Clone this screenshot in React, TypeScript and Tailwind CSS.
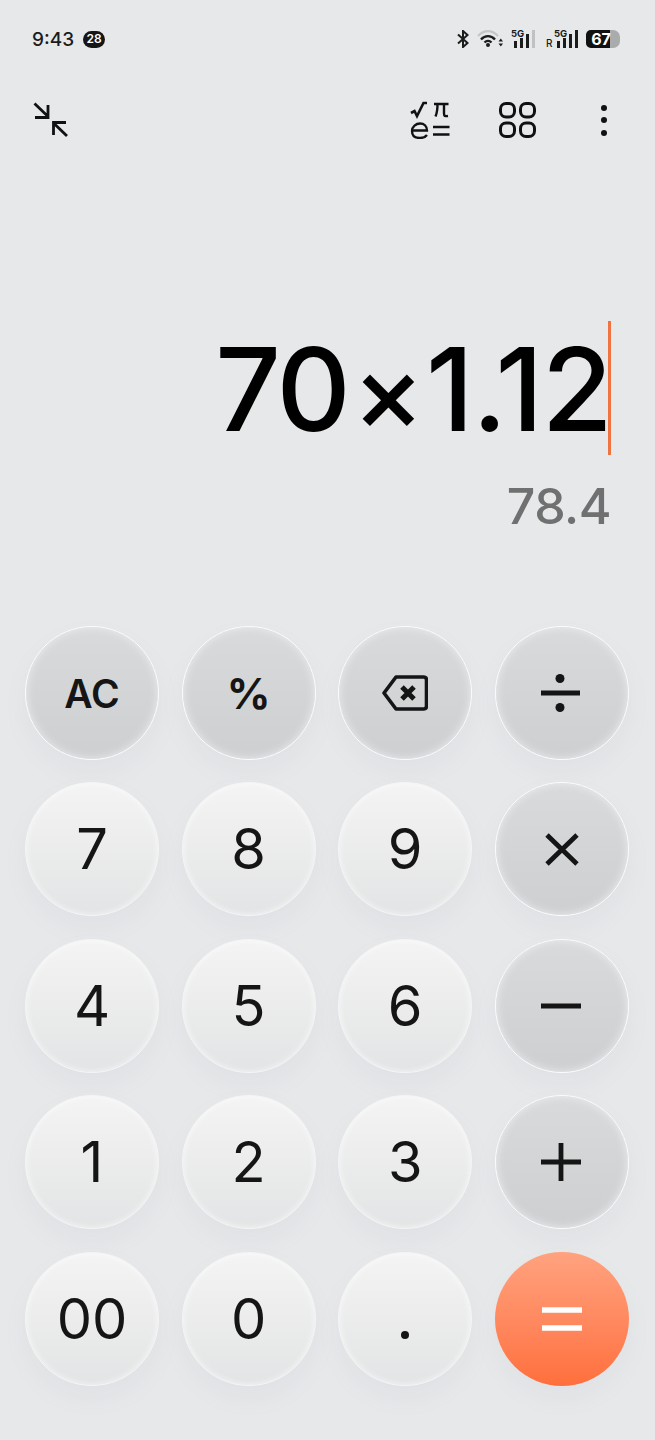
import type { ReactNode } from "react";

type Kind = "light" | "gray" | "accent";

function Key({ kind = "light", children }: { kind?: Kind; children: ReactNode }) {
  const look =
    kind === "light"
      ? "bg-linear-to-b from-[#f4f4f4] to-[#e3e4e5] shadow-[0_12px_22px_rgba(150,155,160,0.08),inset_0_0_6px_rgba(255,255,255,0.7)] border border-[#f4f5f5]"
      : kind === "gray"
        ? "bg-linear-to-b from-[#d8dadb] to-[#cdcfd1] shadow-[0_12px_22px_rgba(150,155,160,0.08),inset_0_0_10px_rgba(240,241,242,0.9)] border-[1.5px] border-[#fcfcfc]"
        : "bg-linear-to-b from-[#ffa27f] to-[#ff6f3c] shadow-[0_12px_22px_rgba(150,155,160,0.08)]";
  return (
    <div className={`w-[134px] h-[134px] rounded-full flex items-center justify-center text-[#151515] ${look}`}>
      {children}
    </div>
  );
}

function Digit({ value }: { value: string }) {
  return <span className="text-[56px] leading-none font-normal">{value}</span>;
}

function Ico({ w, h, className, children }: { w: number; h: number; className?: string; children: ReactNode }) {
  return (
    <svg className={className} width={w} height={h} viewBox={`0 0 ${w} ${h}`} fill="none" stroke="currentColor" strokeWidth="4">
      {children}
    </svg>
  );
}

function Bars({ last }: { last: string }) {
  return (
    <div className="flex items-end gap-[3px]">
      <i className="w-[3px] h-[7px] bg-[#1c1c1c]" />
      <i className="w-[3px] h-[10px] bg-[#1c1c1c]" />
      <i className="w-[3px] h-[14px] bg-[#1c1c1c]" />
      <i className={`w-[3px] h-[18px] ${last}`} />
    </div>
  );
}

function StatusBar() {
  return (
    <div className="h-[78px] flex items-center justify-between pl-[32px] pr-[35px] text-[#1c1c1c]">
      <div className="flex items-center gap-[9px]">
        <span className="text-[19px] font-medium leading-none">9:43</span>
        <span className="w-[22px] h-[17px] rounded-full bg-[#161616] text-white text-[12px] font-semibold leading-none flex items-center justify-center">
          28
        </span>
      </div>
      <div className="flex items-center">
        <svg width="12" height="18" viewBox="0 0 12 18" fill="none" stroke="#1c1c1c" strokeWidth="2">
          <path d="M1 4.500 10.500 13 6 17V1L10.500 5 1 13.500" />
        </svg>
        <svg className="ml-[8px]" width="26" height="18" viewBox="0 0 26 18" fill="none" strokeWidth="2.200">
          <path d="M1 6C7 -0.500 15 -0.500 21 6" stroke="#c4c6c8" />
          <path d="M4 9.500C8 5 14 5 18 9.500" stroke="#1c1c1c" strokeWidth="2.400" />
          <path d="M7.500 12.500C9.500 10.500 12.500 10.500 14.500 12.500" stroke="#1c1c1c" strokeWidth="2.400" />
          <circle cx="11" cy="15" r="2" fill="#1c1c1c" stroke="none" />
          <path d="M21.500 11.500h4.500l-2.200-3zM21.500 13.500h4.500l-2.200 3z" fill="#1c1c1c" stroke="none" />
        </svg>
        <div className="ml-[8px] relative w-[24px] h-[18px]">
          <span className="absolute left-0 -top-[1px] text-[9.500px] font-bold leading-none">5G</span>
          <div className="absolute right-0 bottom-0">
            <Bars last="bg-[#bfc1c3]" />
          </div>
        </div>
        <div className="ml-[11px] relative w-[32px] h-[18px]">
          <span className="absolute left-0 bottom-0 text-[10px] font-medium leading-none">R</span>
          <span className="absolute left-[8px] -top-[1px] text-[9.500px] font-bold leading-none">5G</span>
          <div className="absolute right-0 bottom-0">
            <Bars last="bg-[#1c1c1c]" />
          </div>
        </div>
        <div className="ml-[8px] relative w-[34px] h-[18px] rounded-l-[5px] rounded-r-[7px] bg-[#a9abad] overflow-hidden">
          <div className="w-[24px] h-full bg-[#111111]" />
          <span className="absolute left-0 top-0 w-[30px] text-center text-white text-[16px] font-bold leading-[18px]">67</span>
        </div>
      </div>
    </div>
  );
}

function Toolbar() {
  return (
    <div className="h-[84px] flex items-center pl-[33px] pr-[48px] text-[#111111]">
      <svg width="36" height="36" viewBox="0 0 36 36" fill="none" stroke="currentColor" strokeWidth="2.800">
        <path d="M1.500 1.500 14.500 14M15 3v12.500H2M34 34 21 21.500M20.500 33V20.500H33" />
      </svg>
      <svg className="ml-auto" width="40" height="38" viewBox="0 0 40 38" fill="none" stroke="currentColor" strokeWidth="2.300">
        <path d="M1 12 4.500 10 7 15 13.500 2H17" strokeWidth="2.600" />
        <path d="M24 3H38.500M27.500 3C27.500 8 27 12 25.500 15.500M34 3V12.500C34 15 35 15.500 38 15" strokeWidth="2.400" />
        <path d="M2.500 29.500H17C17 25 14 22.500 10 22.500S2 25.500 2 30 5 37 10 37C13 37 15.500 36 17 34" />
        <path d="M23 26H39.500M23 33.500H39.500" strokeWidth="2.600" />
      </svg>
      <svg className="ml-[49px]" width="37" height="36" viewBox="0 0 37 36" fill="none" stroke="currentColor" strokeWidth="3">
        <rect x="1.500" y="1.500" width="14" height="13.500" rx="5.500" />
        <rect x="21.500" y="1.500" width="14" height="13.500" rx="5.500" />
        <rect x="1.500" y="21" width="14" height="13.500" rx="5.500" />
        <rect x="21.500" y="21" width="14" height="13.500" rx="5.500" />
      </svg>
      <div className="ml-[65px] flex flex-col gap-[6.500px]">
        <i className="block w-[6px] h-[6px] rounded-full bg-[#111111]" />
        <i className="block w-[6px] h-[6px] rounded-full bg-[#111111]" />
        <i className="block w-[6px] h-[6px] rounded-full bg-[#111111]" />
      </div>
    </div>
  );
}

function Keypad() {
  return (
    <div className="grid grid-cols-[repeat(4,134px)] gap-x-[22.600px] gap-y-[22.400px] pl-[25px]">
      <Key kind="gray">
        <span className="text-[39px] font-semibold leading-none">AC</span>
      </Key>
      <Key kind="gray">
        <span className="text-[43px] font-bold leading-none">%</span>
      </Key>
      <Key kind="gray">
        <Ico w={46} h={36}>
          <path d="M14 2H41.500Q44.500 2 44.500 5V31Q44.500 34 41.500 34H14L2 18Z" strokeWidth="3.600" strokeLinejoin="round" />
          <path d="M20 12 32 24M32 12 20 24" strokeWidth="5" />
        </Ico>
      </Key>
      <Key kind="gray">
        <Ico w={40} h={38} className="mr-[3px]">
          <path d="M1 19H40" strokeWidth="4.800" />
          <circle cx="20" cy="4.500" r="4.500" fill="currentColor" stroke="none" />
          <circle cx="20" cy="33.500" r="4.500" fill="currentColor" stroke="none" />
        </Ico>
      </Key>

      <Key><Digit value="7" /></Key>
      <Key><Digit value="8" /></Key>
      <Key><Digit value="9" /></Key>
      <Key kind="gray">
        <Ico w={34} h={33}>
          <path d="M2 2 32 31M32 2 2 31" strokeWidth="4.800" />
        </Ico>
      </Key>

      <Key><Digit value="4" /></Key>
      <Key><Digit value="5" /></Key>
      <Key><Digit value="6" /></Key>
      <Key kind="gray">
        <Ico w={40} h={6} className="mr-[2px]">
          <path d="M0 3H40" strokeWidth="4.800" />
        </Ico>
      </Key>

      <Key><Digit value="1" /></Key>
      <Key><Digit value="2" /></Key>
      <Key><Digit value="3" /></Key>
      <Key kind="gray">
        <Ico w={40} h={38} className="mr-[2px]">
          <path d="M0 19H40M20 0V38" strokeWidth="4.800" />
        </Ico>
      </Key>

      <Key><Digit value="00" /></Key>
      <Key><Digit value="0" /></Key>
      <Key>
        <span className="w-[8px] h-[8px] rounded-full bg-[#151515] mt-[32px]" />
      </Key>
      <Key kind="accent">
        <svg width="40" height="24" viewBox="0 0 40 24" fill="none" stroke="#ffffff" strokeWidth="5.500">
          <path d="M0 3H40M0 21H40" />
        </svg>
      </Key>
    </div>
  );
}

export default function App() {
  return (
    <div className="w-[655px] h-[1440px] bg-[#e6e8ea] overflow-hidden font-['Inter',sans-serif]">
      <StatusBar />
      <Toolbar />
      <div className="mt-[159px] h-[134px] pr-[44px] flex items-center justify-end">
        <span className="text-[115px] leading-none font-medium text-black tracking-[-2.500px] pt-[3px] -mr-[3px]">
          70
          <span className="text-[108px] mx-[4px]">×</span>
          <span className="tracking-[-1.500px]">1.12</span>
        </span>
        <i className="block w-[3px] h-[134px] bg-[#ef7442]" />
      </div>
      <div className="mt-[20px] h-[62px] pr-[44px] flex items-center justify-end text-[50px] leading-none font-medium tracking-[-0.500px] text-[#707070]">
        78.4
      </div>
      <div className="mt-[89px]">
        <Keypad />
      </div>
    </div>
  );
}
